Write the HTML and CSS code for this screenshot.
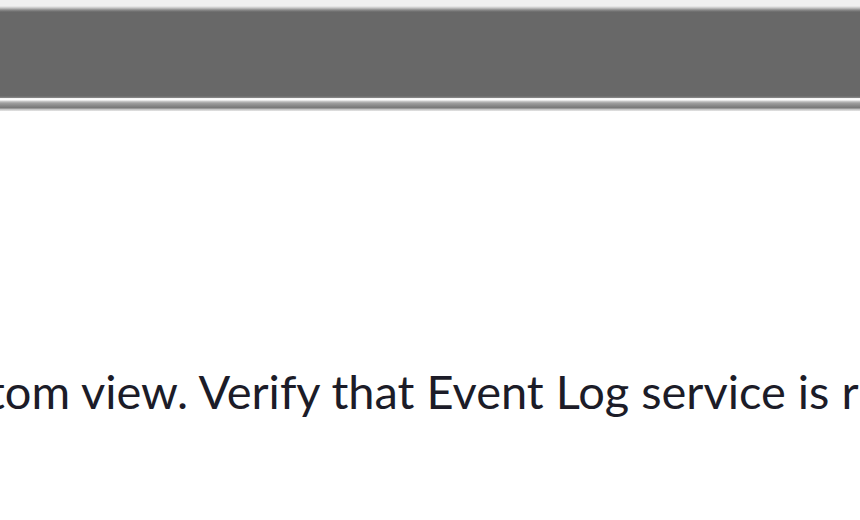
FILE: index.html
```html
<!DOCTYPE html>
<html>
<head>
<meta charset="utf-8">
<link rel="stylesheet" href="styles.css">
</head>
<body>
<div class="frame">
  <div class="titlebar"></div>
  <div class="edge"></div>
  <div class="content">
    <p class="message">tom view. Verify that Event Log service is running</p>
  </div>
</div>
</body>
</html>
```

FILE: styles.css
```css
html, body {
  margin: 0;
  padding: 0;
  background: #ffffff;
}
.frame {
  width: 860px;
  height: 520px;
  overflow: hidden;
  display: flex;
  flex-direction: column;
}
.titlebar {
  height: 98px;
  background: linear-gradient(to bottom,
    #f0f0f0 0px, #f0f0f0 6px,
    #c4c4c4 8px, #8a8a8a 10px, #686868 12px,
    #686868 96px, #8c8c8c 98px);
}
.edge {
  height: 13px;
  background: linear-gradient(to bottom,
    #f4f4f4 0px, #ffffff 2px, #d0d0d0 3px,
    #a0a0a0 5px, #858585 8px, #777777 10px,
    #bdbdbd 11px, #e6e6e6 13px);
}
.content {
  flex: 1;
  padding-top: 250px;
  overflow: hidden;
}
.message {
  margin: 0 0 0 -12px;
  white-space: nowrap;
  font-family: "Lato", "Open Sans", sans-serif;
  font-size: 47px;
  line-height: 60px;
  color: #1c1c28;
}
```
